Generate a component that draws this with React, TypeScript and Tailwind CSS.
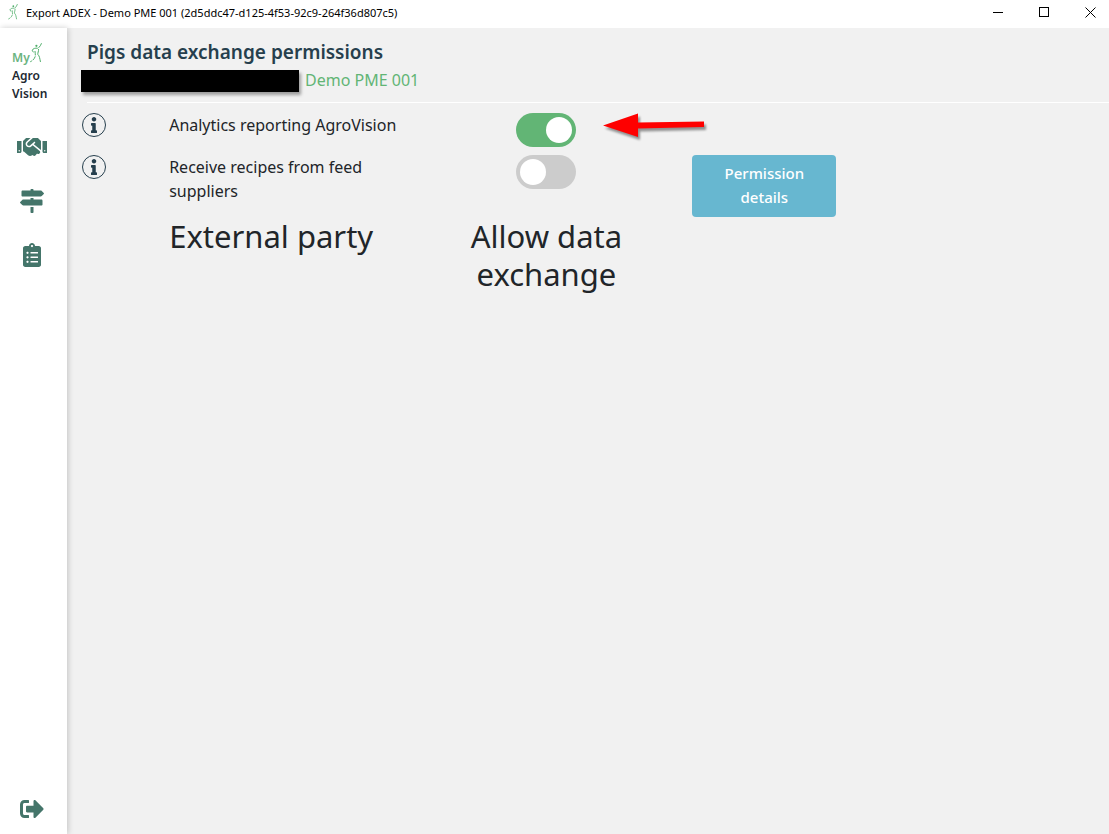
import { useState } from "react";
import { FaClipboardList, FaHandshake, FaInfo, FaMapSigns, FaSignOutAlt } from "react-icons/fa";

const NAV_ITEMS = [
  { label: "Permissions", icon: <FaHandshake size={30} /> },
  { label: "Directions", icon: <FaMapSigns size={24} /> },
  { label: "Logs", icon: <FaClipboardList size={24} /> },
];

function Runner({ className }: { className: string }) {
  return (
    <svg viewBox="0 0 12 20" fill="none" stroke="#4fae6a" strokeLinecap="round" className={className} aria-hidden="true">
      <circle cx="6.4" cy="2.8" r="1.1" fill="#4fae6a" stroke="none" />
      <path d="M11.4 0.6C11 2 10 3.4 8.8 4.6" />
      <path d="M7.4 5.2C5.2 4.8 3 5.6 2.2 7.2L3.2 9" />
      <path d="M8.6 6.4C8.8 8.4 7.6 9.8 7.8 11.4C9.6 13 9.8 15.6 10.4 18.6" />
      <path d="M5 8.4C5.2 10.4 5.6 12 5.2 13.6C4.4 16 2.6 17.6 0.6 18.6" strokeDasharray="3.5 1.8" />
    </svg>
  );
}

function TitleBar() {
  return (
    <header className="flex h-7 items-center bg-white text-black">
      <Runner className="mb-1 ml-2 h-4 w-2.5 shrink-0" />
      <span className="ml-2 flex-1 truncate pb-0.5 text-[11px] leading-4">
        Export ADEX - Demo PME 001 (2d5ddc47-d125-4f53-92c9-264f36d807c5)
      </span>
      <div className="-mr-1 flex pb-1">
        <button aria-label="Minimize" className="flex h-6 w-[46px] items-center justify-center">
          <svg width="11" height="11" stroke="currentColor" shapeRendering="crispEdges">
            <path d="M0 5.5H10" />
          </svg>
        </button>
        <button aria-label="Maximize" className="flex h-6 w-[46px] items-center justify-center">
          <svg width="11" height="11" fill="none" stroke="currentColor" shapeRendering="crispEdges">
            <path d="M0.5 0.5H9.5V9.5H0.5Z" />
          </svg>
        </button>
        <button aria-label="Close" className="flex h-6 w-[46px] items-center justify-center">
          <svg width="11" height="11" stroke="currentColor">
            <path d="M0.5 0.5L10.5 10.5M10.5 0.5L0.5 10.5" />
          </svg>
        </button>
      </div>
    </header>
  );
}

function Sidebar() {
  return (
    <aside className="z-10 flex w-[67px] shrink-0 flex-col items-center bg-white pr-1 pb-[13px] shadow-[1px_0_6px_rgba(0,0,0,0.2)]">
      <div className="w-full pt-[15px] pl-3 text-[12px] leading-[18px] font-semibold text-[#222831]">
        <div className="flex items-end text-[#6cb481]">
          My
          <Runner className="mb-1 h-5 w-3" />
        </div>
        <div>Agro</div>
        <div>Vision</div>
      </div>
      <nav className="mt-7 flex flex-1 flex-col items-center gap-[22px] text-[#44756a]">
        {NAV_ITEMS.map((item) => (
          <a key={item.label} href="#" aria-label={item.label} className="flex size-8 items-center justify-center">
            {item.icon}
          </a>
        ))}
      </nav>
      <button aria-label="Sign out" className="text-[#44756a]">
        <FaSignOutAlt size={24} />
      </button>
    </aside>
  );
}

function InfoButton({ label }: { label: string }) {
  return (
    <button
      aria-label={label}
      className="flex size-6 items-center justify-center rounded-full border border-[#263f4d] text-[#263f4d]"
    >
      <FaInfo size={16} />
    </button>
  );
}

interface ToggleProps {
  id: string;
  checked: boolean;
  onChange: (checked: boolean) => void;
}

function Toggle({ id, checked, onChange }: ToggleProps) {
  return (
    <input
      id={id}
      type="checkbox"
      role="switch"
      checked={checked}
      onChange={(e) => onChange(e.target.checked)}
      className="block h-[34px] w-[60px] cursor-pointer appearance-none rounded-full bg-[#ccc] p-1 before:block before:size-[26px] before:rounded-full before:bg-white checked:bg-[#62b575] checked:before:ml-[26px]"
    />
  );
}

function Arrow() {
  return (
    <svg
      width="108"
      height="30"
      viewBox="0 0 108 30"
      className="absolute top-0 left-[87px] drop-shadow-[2px_3px_1px_rgba(0,0,0,0.4)]"
      aria-hidden="true"
    >
      <path d="M0 12.5L35 0.5V9.5L101 8.5V14L35 15.5V24Z" fill="#fe0000" />
    </svg>
  );
}

export default function App() {
  const [analytics, setAnalytics] = useState(true);
  const [recipes, setRecipes] = useState(false);

  return (
    <div className="flex min-h-screen flex-col bg-[#f1f1f1] font-['Noto_Sans','Open_Sans',sans-serif] text-[#212529]">
      <TitleBar />
      <div className="flex flex-1">
        <Sidebar />
        <main className="min-w-0 flex-1 overflow-x-hidden">
          <div className="ml-5 border-b border-white pt-3 pb-2">
            <h1 className="text-[19px] leading-6 font-semibold text-[#263f4d]">Pigs data exchange permissions</h1>
            <div className="-ml-1.5 flex items-end pt-1 pb-0.5">
              <span className="h-[22px] w-[218px] bg-black shadow-[2px_3px_3px_rgba(0,0,0,0.35)]" />
              <span className="ml-1.5 text-base leading-6 text-[#62b575]">Demo PME 001</span>
            </div>
          </div>

          <div className="-mr-1 grid grid-cols-12 pt-2.5 text-base leading-6">
            <div className="col-span-1 pl-[15px]">
              <InfoButton label="About analytics reporting" />
            </div>
            <label htmlFor="analytics" className="col-span-3 px-[15px]">
              Analytics reporting AgroVision
            </label>
            <div className="col-span-3 flex justify-center pb-2">
              <div className="relative">
                <Toggle id="analytics" checked={analytics} onChange={setAnalytics} />
                <Arrow />
              </div>
            </div>
            <div className="col-span-5" />

            <div className="col-span-1 pl-[15px]">
              <InfoButton label="About feed supplier recipes" />
            </div>
            <label htmlFor="recipes" className="col-span-3 px-[15px]">
              Receive recipes from feed suppliers
            </label>
            <div className="col-span-3 flex justify-center">
              <Toggle id="recipes" checked={recipes} onChange={setRecipes} />
            </div>
            <div className="col-span-2 px-[15px]">
              <button className="w-full rounded bg-[#67b7d0] px-3 pt-1.5 pb-2 text-[15px] font-medium text-white">
                Permission details
              </button>
            </div>
            <div className="col-span-3" />

            <h2 className="col-span-3 col-start-2 px-[15px] text-[31px] leading-[38px]">External party</h2>
            <h2 className="col-span-3 px-[15px] text-center text-[31px] leading-[38px]">Allow data exchange</h2>
          </div>
        </main>
      </div>
    </div>
  );
}
